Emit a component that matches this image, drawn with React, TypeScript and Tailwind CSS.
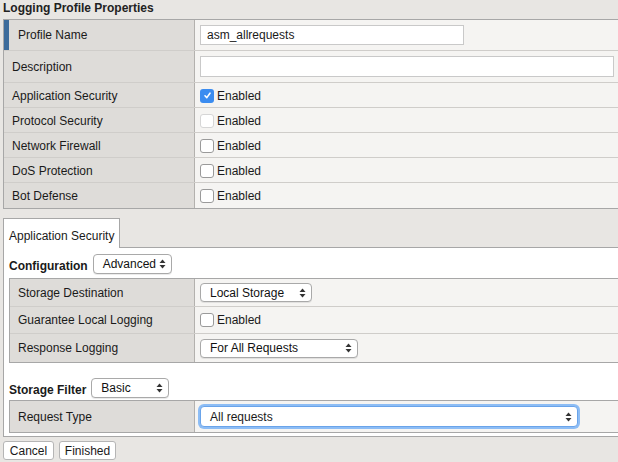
const font = { fontFamily: '"Liberation Sans", Arial, sans-serif' };

const Arrows = () => (
  <svg width="7" height="10" viewBox="0 0 7 10" className="shrink-0">
    <path d="M3.5 0.5 L6.5 4 L0.5 4 Z" fill="#333" />
    <path d="M3.5 9.5 L6.5 6 L0.5 6 Z" fill="#333" />
  </svg>
);

const Select = ({ label, className }: { label: string; className: string }) => (
  <div
    className={`flex items-center justify-between bg-white border border-[#a9a9a9] rounded-[4px] pl-[9px] pr-[5px] text-[12px] text-[#111] shadow-[0_1px_0_rgba(0,0,0,0.08)] ${className}`}
  >
    <span>{label}</span>
    <Arrows />
  </div>
);

const Checkbox = ({ checked, disabled }: { checked?: boolean; disabled?: boolean }) =>
  checked ? (
    <div className="w-[14px] h-[14px] rounded-[3px] bg-[#3b8cf0] flex items-center justify-center">
      <svg width="9" height="9" viewBox="0 0 9 9">
        <path d="M2 4.8 L3.8 6.6 L7 2.2" stroke="#fff" strokeWidth="1.6" fill="none" strokeLinecap="round" strokeLinejoin="round" />
      </svg>
    </div>
  ) : (
    <div
      className={`w-[14px] h-[14px] rounded-[3px] bg-white border ${disabled ? "border-[#d6d6d6]" : "border-[#9a9a9a]"}`}
    />
  );

const checkRows = [
  { label: "Application Security", checked: true },
  { label: "Protocol Security", disabled: true },
  { label: "Network Firewall" },
  { label: "DoS Protection" },
  { label: "Bot Defense" },
];

export default function App() {
  return (
    <div style={font} className="w-[618px] h-[462px] overflow-hidden bg-[#e8e6e3] text-[12px] text-[#1a1a1a]">
      {/* title */}
      <div className="h-[19px] pl-[3px] text-[12px] font-bold leading-[17px] text-[#222]">
        Logging Profile Properties
      </div>

      {/* properties table */}
      <div className="ml-[3px] border-t border-l border-b border-[#a7a7a7]">
        <div className="grid grid-cols-[191px_1fr] h-[31px] border-b border-[#cfcdca]">
          <div className="flex items-center bg-[#dedcd9] border-r border-[#b3b1ae]">
            <div className="w-[5px] h-full bg-[#3d6c9b]" />
            <span className="pl-[9px]">Profile Name</span>
          </div>
          <div className="flex items-center bg-[#f5f4f2] pl-[5px]">
            <div className="w-[264px] h-[20px] bg-white border border-[#c9c9c9] pl-[6px] flex items-center text-[12px]">
              asm_allrequests
            </div>
          </div>
        </div>
        <div className="grid grid-cols-[191px_1fr] h-[32px] border-b border-[#cfcdca]">
          <div className="flex items-center bg-[#dedcd9] border-r border-[#b3b1ae] pl-[8px]">Description</div>
          <div className="flex items-center bg-[#f5f4f2] pl-[5px] pr-[4px]">
            <div className="w-full h-[21px] bg-white border border-[#c9c9c9]" />
          </div>
        </div>
        {checkRows.map((r, i) => (
          <div
            key={r.label}
            className={`grid grid-cols-[191px_1fr] h-[25px] ${i < checkRows.length - 1 ? "border-b border-[#cfcdca]" : ""}`}
          >
            <div className="flex items-center bg-[#dedcd9] border-r border-[#b3b1ae] pl-[8px] pt-[1px]">{r.label}</div>
            <div className="flex items-center gap-[3px] bg-[#f5f4f2] pl-[5px] pt-[1px]">
              <Checkbox checked={r.checked} disabled={r.disabled} />
              <span>Enabled</span>
            </div>
          </div>
        ))}
      </div>

      {/* tab */}
      <div className="mt-[9px] ml-[3px] flex">
        <div className="w-[117px] h-[30px] bg-white border border-b-0 border-[#a7a7a7] pl-[5px] pt-[8px] relative z-10 -mb-px">
          Application Security
        </div>
      </div>

      {/* tab panel */}
      <div className="ml-[3px] h-[190px] bg-white border-t border-l border-b border-[#a7a7a7] pl-[5px] pt-[5px]">
        <div className="flex items-end gap-[5px] h-[21px]">
          <span className="font-bold text-[12px] leading-[14px] mb-[1px]">Configuration</span>
          <Select label="Advanced" className="w-[79px] h-[20px]" />
        </div>

        <div className="mt-[4px] border-t border-l border-b border-[#a7a7a7]">
          <div className="grid grid-cols-[185px_1fr] h-[28px] border-b border-[#cfcdca]">
            <div className="flex items-center bg-[#dedcd9] border-r border-[#b3b1ae] pl-[8px]">Storage Destination</div>
            <div className="flex items-center bg-[#f5f4f2] pl-[5px]">
              <Select label="Local Storage" className="w-[112px] h-[19px]" />
            </div>
          </div>
          <div className="grid grid-cols-[185px_1fr] h-[27px] border-b border-[#cfcdca]">
            <div className="flex items-center bg-[#dedcd9] border-r border-[#b3b1ae] pl-[8px]">Guarantee Local Logging</div>
            <div className="flex items-center gap-[3px] bg-[#f5f4f2] pl-[5px]">
              <Checkbox />
              <span>Enabled</span>
            </div>
          </div>
          <div className="grid grid-cols-[185px_1fr] h-[28px]">
            <div className="flex items-center bg-[#dedcd9] border-r border-[#b3b1ae] pl-[8px]">Response Logging</div>
            <div className="flex items-center bg-[#f5f4f2] pl-[5px]">
              <Select label="For All Requests" className="w-[158px] h-[19px]" />
            </div>
          </div>
        </div>

        <div className="mt-[14px] flex items-end gap-[5px] h-[21px]">
          <span className="font-bold text-[12px] leading-[14px] mb-[1px]">Storage Filter</span>
          <Select label="Basic" className="w-[78px] h-[20px]" />
        </div>

        <div className="mt-[2px] border-t border-l border-b border-[#a7a7a7]">
          <div className="grid grid-cols-[185px_1fr] h-[31px]">
            <div className="flex items-center bg-[#dedcd9] border-r border-[#b3b1ae] pl-[8px]">Request Type</div>
            <div className="flex items-center bg-[#f5f4f2] pl-[5px]">
              <div className="flex items-center justify-between w-[378px] h-[21px] bg-white border border-[#6aa4ea] rounded-[4px] ring-[2px] ring-[#8dbdf5] pl-[9px] pr-[5px]">
                <span>All requests</span>
                <Arrows />
              </div>
            </div>
          </div>
        </div>
      </div>

      {/* buttons */}
      <div className="mt-[4px] ml-[3px] flex gap-[5px]">
        <div className="w-[51px] h-[19px] flex items-center justify-center bg-white border border-[#b5b5b5] rounded-[3px]">Cancel</div>
        <div className="w-[57px] h-[19px] flex items-center justify-center bg-white border border-[#b5b5b5] rounded-[3px]">Finished</div>
      </div>
    </div>
  );
}
